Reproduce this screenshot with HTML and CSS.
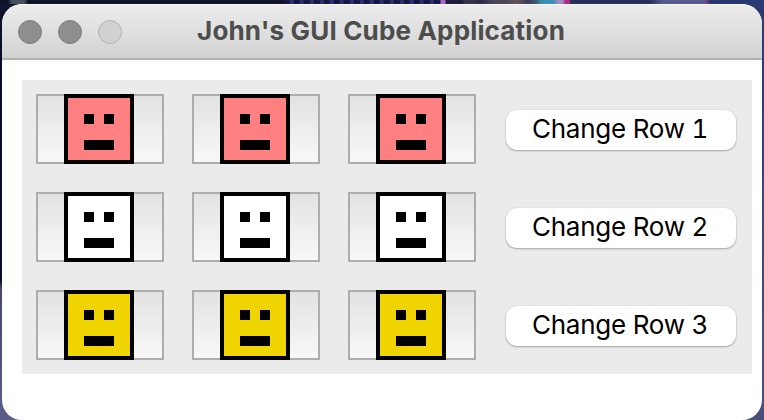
FILE: index.html
```html
<!DOCTYPE html>
<html lang="en">
<head>
<meta charset="utf-8">
<title>John's GUI Cube Application</title>
<link rel="stylesheet" href="styles.css">
</head>
<body>
<main class="window">
  <header class="titlebar">
    <div class="controls"><i class="dot"></i><i class="dot"></i><i class="dot disabled"></i></div>
    <h1 class="title">John's GUI Cube Application</h1>
  </header>
  <section class="panel">
    <div class="row red">
      <div class="cell"><svg class="face" viewBox="0 0 70 70"><use href="#face"/></svg></div>
      <div class="cell"><svg class="face" viewBox="0 0 70 70"><use href="#face"/></svg></div>
      <div class="cell"><svg class="face" viewBox="0 0 70 70"><use href="#face"/></svg></div>
      <button class="change">Change Row 1</button>
    </div>
    <div class="row white">
      <div class="cell"><svg class="face" viewBox="0 0 70 70"><use href="#face"/></svg></div>
      <div class="cell"><svg class="face" viewBox="0 0 70 70"><use href="#face"/></svg></div>
      <div class="cell"><svg class="face" viewBox="0 0 70 70"><use href="#face"/></svg></div>
      <button class="change">Change Row 2</button>
    </div>
    <div class="row yellow">
      <div class="cell"><svg class="face" viewBox="0 0 70 70"><use href="#face"/></svg></div>
      <div class="cell"><svg class="face" viewBox="0 0 70 70"><use href="#face"/></svg></div>
      <div class="cell"><svg class="face" viewBox="0 0 70 70"><use href="#face"/></svg></div>
      <button class="change">Change Row 3</button>
    </div>
  </section>
</main>
<svg class="defs" width="0" height="0">
  <defs>
    <g id="face">
      <rect x="2" y="2" width="66" height="66" fill="currentColor" stroke="#000" stroke-width="4"/>
      <path d="M20 20h10v10H20zM40 20h10v10H40zM20 46h30v10H20z" fill="#000"/>
    </g>
  </defs>
</svg>
</body>
</html>
```
FILE: styles.css
```css
* { box-sizing: border-box; }
body {
  margin: 0;
  height: 420px;
  overflow: hidden;
  padding: 4px 2px 0;
  font-family: Inter, "Liberation Sans", sans-serif;
  background:
    linear-gradient(90deg, transparent 8px, #46505f 12px 24px, transparent 28px) top / 100% 4px no-repeat,
    repeating-linear-gradient(90deg, #17183f 0 5px, #33307a 7px 9px, #17183f 10px) 284px 0 / 156px 4px no-repeat,
    linear-gradient(90deg, #101229 0 284px, #17183f 440px, #a868d0 441px 445px, #1d1d3c 446px 460px,
      #39324a 466px 472px, #2a2948 480px, #4c465a 494px 506px, #66565a 516px, #3b3b5c 528px, #3f5a70 536px,
      #3c8fb8 542px 554px, #a08cc4 558px 563px, #b02c74 565px 569px, #27305c 571px 650px,
      #565a8e 662px 704px, #7c4a84 706px, #27376e 710px 740px, #2f3c7a) top / 100% 4px no-repeat,
    linear-gradient(#14152f, #0a0c2c 50px 280px, #45486f 288px, #5c5c88) left / 24px 100% no-repeat,
    linear-gradient(#2b3a6e, #2c3d78 100px, #3c4a7c 240px, #4a4d7a);
}
.window {
  height: 416px;
  border-radius: 20px;
  background: #fff;
  overflow: hidden;
}
.titlebar {
  height: 56px;
  display: grid;
  grid-template-columns: 120px 1fr 122px;
  align-items: center;
  background: linear-gradient(#ececec, #d2d2d2);
  border-top: 1px solid #f6f6f6;
  border-bottom: 2px solid #b1b1b1;
}
.controls { display: flex; gap: 16px; padding-left: 16px; }
.dot {
  width: 24px;
  height: 24px;
  border-radius: 50%;
  background: #8e8e8e;
  border: 1px solid #7c7c7c;
}
.dot.disabled { background: #d1d1d1; border-color: #b2b2b2; }
.title {
  margin: 0 0 2px;
  text-align: center;
  font-size: 26px;
  line-height: 32px;
  font-weight: 700;
  letter-spacing: .17px;
  white-space: nowrap;
  color: #4d4d4d;
}
.panel {
  width: 730px;
  height: 294px;
  margin: 20px 0 0 20px;
  padding: 14px;
  background: #ebebeb;
  display: flex;
  flex-direction: column;
  gap: 28px;
}
.row { display: flex; align-items: center; gap: 28px; }
.red { color: #ff8080; }
.white { color: #fff; }
.yellow { color: #f0d400; }
.cell {
  width: 128px;
  height: 70px;
  background: linear-gradient(#e2e2e2, #f8f8f8);
  border: 2px solid #adadad;
}
.face { display: block; width: 70px; height: 70px; margin: -2px 0 0 26px; }
.change {
  width: 230px;
  height: 40px;
  margin: 2px 0 0 2px;
  padding: 0 0 2px 26px;
  border: 0;
  border-radius: 11px;
  background: #fff;
  box-shadow: 0 1px 2px rgba(0, 0, 0, .3), 0 0 1px rgba(0, 0, 0, .15);
  font: 400 26px/36px Inter, "Liberation Sans", sans-serif;
  font-variant-numeric: tabular-nums;
  letter-spacing: -.25px;
  text-align: left;
  color: #000;
  white-space: nowrap;
}
.defs { position: absolute; }
```
